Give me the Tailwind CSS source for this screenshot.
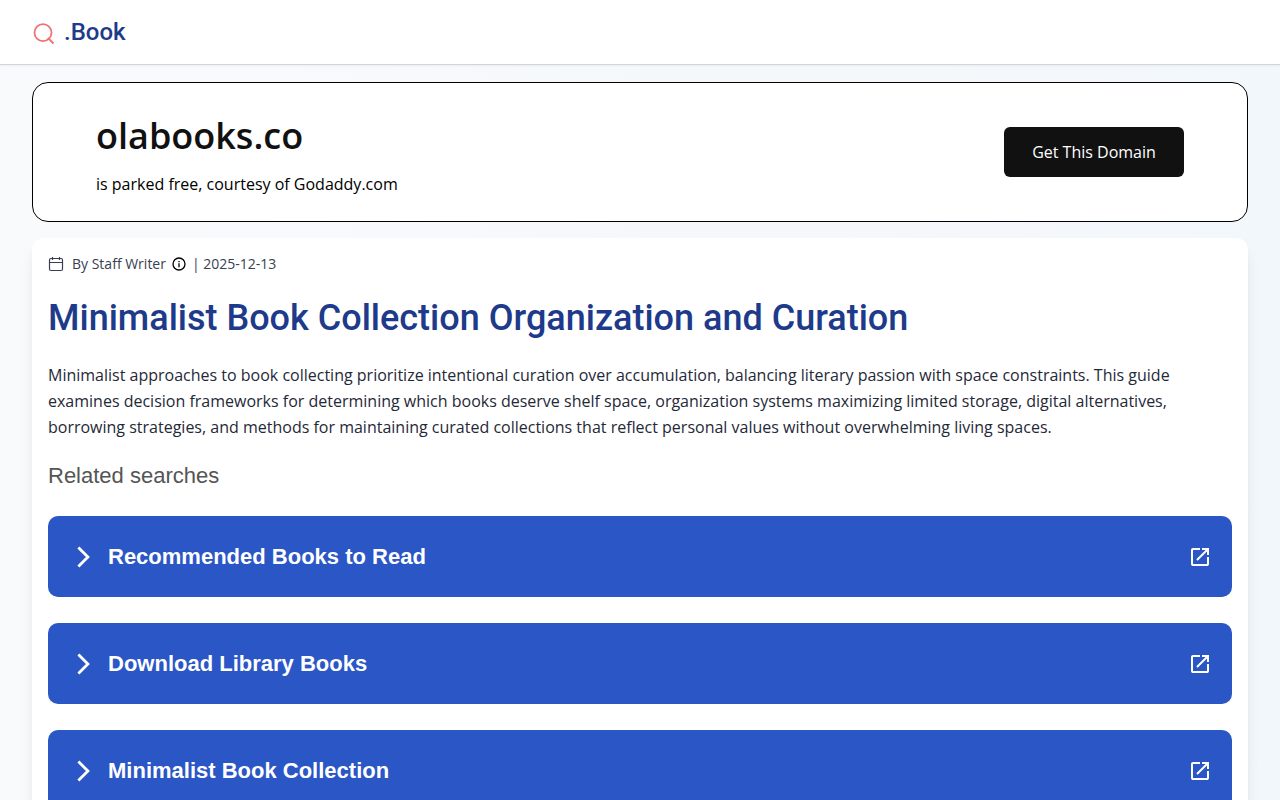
<!DOCTYPE html>
<html lang="en">
<head>
<meta charset="utf-8">
<title>.Book</title>
<script src="https://cdn.jsdelivr.net/npm/@tailwindcss/browser@4"></script>
</head>
<body class="h-screen overflow-hidden bg-linear-to-r from-[#f9fafc] to-[#f2f7fb] font-['Open_Sans',sans-serif] text-[#111]">
<svg class="hidden">
  <symbol id="chevron" viewBox="0 0 24 24"><path d="M6.400 2.500 15.900 12l-9.500 9.500" fill="none" stroke="currentColor" stroke-width="2.800"/></symbol>
  <symbol id="open" viewBox="0 0 24 24"><path fill="currentColor" d="M5 21q-.825 0-1.412-.587T3 19V5q0-.825.588-1.412T5 3h7v2H5v14h14v-7h2v7q0 .825-.587 1.413T19 21zm4.700-5.300-1.400-1.400L17.600 5H14V3h7v7h-2V6.400z"/></symbol>
</svg>
<header class="border-b border-[#d1d5db] bg-white px-8 shadow-xs">
  <a href="#" class="flex h-16 items-center gap-2 font-['Roboto',sans-serif] text-2xl font-medium text-[#1e3a8a]">
    <svg class="mt-1 size-6 text-[#f07171]" viewBox="0 0 24 24" fill="none" stroke="currentColor" stroke-width="1.800"><circle cx="11" cy="10.700" r="8.500"/><path d="m16 16 5.500 5.500"/></svg>
    <span>.Book</span>
  </a>
</header>
<main class="px-8 pt-[17px]">
  <section class="flex h-[140px] items-center justify-between rounded-2xl border border-black bg-white px-[63px]">
    <div>
      <h1 class="mt-1 text-4xl leading-[48px] font-semibold">olabooks.co</h1>
      <p class="mt-3 text-base text-black">is parked free, courtesy of Godaddy.com</p>
    </div>
    <button class="h-[50px] w-[180px] rounded-md bg-[#111] text-base text-white">Get This Domain</button>
  </section>
  <article class="mt-4 rounded-xl bg-white p-4 shadow-lg">
    <div class="flex h-5 items-center text-sm text-[#374151]">
      <svg class="mr-2 size-4" viewBox="0 0 16 16" fill="none" stroke="currentColor" stroke-width="1.200"><rect x="1.500" y="2.500" width="13" height="12" rx="1.500"/><path d="M1.500 6.500h13M4.500 1v3M11.500 1v3"/></svg>
      <span>By Staff Writer</span>
      <svg class="mx-[6px] size-[14px] text-black" viewBox="0 0 14 14" fill="none" stroke="currentColor" stroke-width="1.300"><circle cx="7" cy="7" r="6"/><path d="M7 6.300v4M7 4v1.200"/></svg>
      <span>| 2025-12-13</span>
    </div>
    <h2 class="mt-6 font-['Roboto',sans-serif] text-4xl font-medium text-[#1e3a8a]">Minimalist Book Collection Organization and Curation</h2>
    <p class="mt-6 text-base leading-relaxed text-[#1f2937]">Minimalist approaches to book collecting prioritize intentional curation over accumulation, balancing literary passion with space constraints. This guide examines decision frameworks for determining which books deserve shelf space, organization systems maximizing limited storage, digital alternatives, borrowing strategies, and methods for maintaining curated collections that reflect personal values without overwhelming living spaces.</p>
    <h3 class="mt-5 font-['Liberation_Sans',sans-serif] text-[22px] leading-8 text-[#555]">Related searches</h3>
    <nav class="mt-6 flex flex-col gap-[26px] font-['Liberation_Sans',sans-serif] text-[22px] font-bold text-white">
      <a href="#" class="flex h-[81px] items-center rounded-[10px] bg-[#2a56c6] px-5"><svg class="mr-3 ml-1 size-6"><use href="#chevron"/></svg><span class="flex-1">Recommended Books to Read</span><svg class="size-6"><use href="#open"/></svg></a>
      <a href="#" class="flex h-[81px] items-center rounded-[10px] bg-[#2a56c6] px-5"><svg class="mr-3 ml-1 size-6"><use href="#chevron"/></svg><span class="flex-1">Download Library Books</span><svg class="size-6"><use href="#open"/></svg></a>
      <a href="#" class="flex h-[81px] items-center rounded-[10px] bg-[#2a56c6] px-5"><svg class="mr-3 ml-1 size-6"><use href="#chevron"/></svg><span class="flex-1">Minimalist Book Collection</span><svg class="size-6"><use href="#open"/></svg></a>
    </nav>
  </article>
</main>
</body>
</html>
